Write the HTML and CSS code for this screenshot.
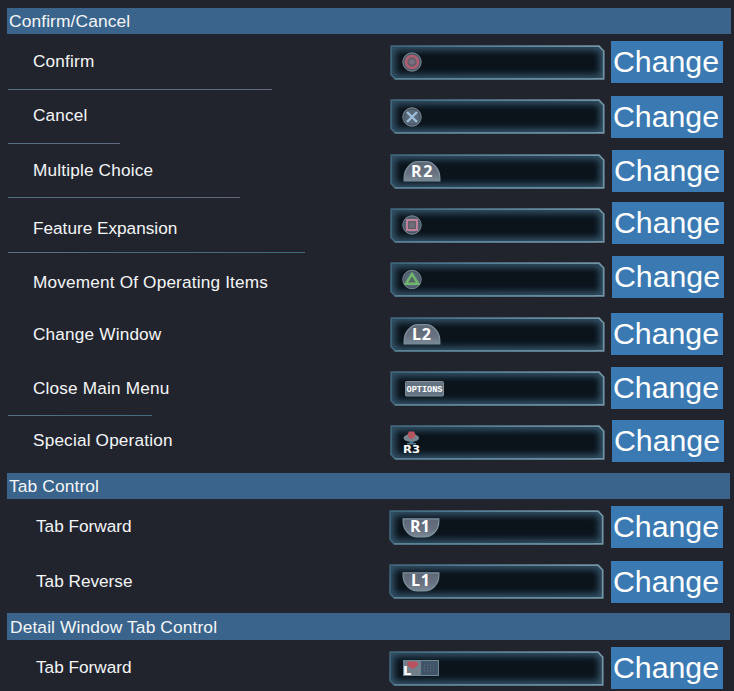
FILE: index.html
```
<!DOCTYPE html>
<html lang="en">
<head>
<meta charset="utf-8">
<title>Controls</title>
<link rel="stylesheet" href="styles.css">
</head>
<body>
<svg class="defs" width="0" height="0" aria-hidden="true">
  <defs>
    <filter id="glow" x="-10%" y="-50%" width="120%" height="200%"><feGaussianBlur stdDeviation="3"/></filter>
    <linearGradient id="edge" x1="0" y1="0" x2="1" y2="0">
      <stop offset="0" stop-color="#3f6478"/><stop offset=".4" stop-color="#557c91"/><stop offset="1" stop-color="#7394a5"/>
    </linearGradient>
    <linearGradient id="steel" x1="0" y1="0" x2="0" y2="1">
      <stop offset="0" stop-color="#5d6775"/><stop offset=".6" stop-color="#68717f"/><stop offset="1" stop-color="#7b8a98"/>
    </linearGradient>
    <clipPath id="frameClip"><path d="M1.5 1H209L214 6V34H5L1 30V1Z"/></clipPath>
    <symbol id="frame" viewBox="0 0 216 36" overflow="visible">
      <path d="M1.5 1H209L214 6V34H5L1 30V1Z" fill="#0b131b"/>
      <g clip-path="url(#frameClip)"><path d="M1.5 1H209L214 6V34H5L1 30V1Z" fill="none" stroke="#315166" stroke-width="9" filter="url(#glow)"/></g>
      <path d="M1.2 1.2H209L213.7 6V33.8H5L1 29.5Z" fill="none" stroke="url(#edge)" stroke-width="1.7"/>
      <path d="M5 33.8H205" stroke="#658a9d" stroke-width="1.3"/>
    </symbol>
    <symbol id="disc" viewBox="0 0 20 20">
      <circle cx="10" cy="10" r="9.2" fill="#596879" stroke="#7c8994" stroke-width="1"/>
      <circle cx="10" cy="10" r="7.9" fill="none" stroke="#465462" stroke-width="1"/>
    </symbol>
    <symbol id="upper" viewBox="0 0 38 22">
      <path d="M1.2 20.3V17C1.2 9 7.5 1.2 15 1.2H23C30.5 1.2 36.8 9 36.8 17V20.3Z" fill="url(#steel)" stroke="#7d909e" stroke-width="1.3"/>
    </symbol>
    <symbol id="lower" viewBox="0 0 38 22">
      <path d="M1.2 1.2H36.8V4.5C36.8 12.5 30 19.3 22.5 19.3H15.5C8 19.3 1.2 12.5 1.2 4.5Z" fill="url(#steel)" stroke="#7d909e" stroke-width="1.3"/>
    </symbol>
  </defs>
</svg>
<main class="settings">
  <h2 class="heading">Confirm/Cancel</h2>
  <section>
    <div class="row confirm"><span class="label">Confirm</span>
      <svg class="field" viewBox="0 0 216 36"><use href="#frame"/><use href="#disc" x="12" y="7" width="20" height="20"/><circle cx="22" cy="17" r="6" fill="#61606b" stroke="#ae5e70" stroke-width="2.7"/><circle cx="22" cy="17" r="2.5" fill="#7c7180"/></svg>
      <button class="change">Change</button></div>
    <div class="row cancel"><span class="label">Cancel</span>
      <svg class="field" viewBox="0 0 216 36"><use href="#frame"/><use href="#disc" x="12" y="8" width="20" height="20"/><path d="M17 13l10 10m0-10l-10 10" stroke="#9dbfd9" stroke-width="2.4"/></svg>
      <button class="change">Change</button></div>
    <div class="row multiple"><span class="label">Multiple Choice</span>
      <svg class="field" viewBox="0 0 216 36"><use href="#frame"/><use href="#upper" x="13" y="6.5" width="38" height="22"/><text class="pad" x="21" y="23" textLength="21.5">R2</text></svg>
      <button class="change">Change</button></div>
    <div class="row feature"><span class="label">Feature Expansion</span>
      <svg class="field" viewBox="0 0 216 36"><use href="#frame"/><use href="#disc" x="12" y="7" width="20" height="20"/><rect x="17" y="12" width="10" height="10" fill="#625f6b" stroke="#bf8199" stroke-width="2"/><rect x="19.5" y="14.5" width="5" height="5" fill="#716c79"/></svg>
      <button class="change">Change</button></div>
    <div class="row movement"><span class="label">Movement Of Operating Items</span>
      <svg class="field" viewBox="0 0 216 36"><use href="#frame"/><use href="#disc" x="12" y="7.5" width="20" height="20"/><path d="M22 12L28.2 21.8H15.8Z" fill="#526a64" stroke="#70b66d" stroke-width="2.4"/></svg>
      <button class="change">Change</button></div>
    <div class="row window"><span class="label">Change Window</span>
      <svg class="field" viewBox="0 0 216 36"><use href="#frame"/><use href="#upper" x="13" y="6.5" width="38" height="22"/><text class="pad" x="22" y="23" textLength="19">L2</text></svg>
      <button class="change">Change</button></div>
    <div class="row close"><span class="label">Close Main Menu</span>
      <svg class="field" viewBox="0 0 216 36"><use href="#frame"/><rect x="15.5" y="10.5" width="38" height="14.5" rx="1" fill="#657482" stroke="#7f8d99"/><text class="options" x="16.5" y="21.3" textLength="36" lengthAdjust="spacingAndGlyphs">OPTIONS</text></svg>
      <button class="change">Change</button></div>
    <div class="row special"><span class="label">Special Operation</span>
      <svg class="field" viewBox="0 0 216 36"><use href="#frame"/><ellipse cx="21.3" cy="13" rx="7.8" ry="3.8" fill="#758590"/><path d="M19 16h5l-1 2h3v1.5h-9V18h3z" fill="#52798b"/><path d="M19 6.5h5l1.5 3-1 3-3 1.7-3-1.7-1-3z" fill="#b7555f"/><text class="stick" x="13" y="27.7" textLength="17" lengthAdjust="spacingAndGlyphs">R3</text></svg>
      <button class="change">Change</button></div>
  </section>
  <h2 class="heading tab-heading">Tab Control</h2>
  <section class="tabs">
    <div class="row forward"><span class="label">Tab Forward</span>
      <svg class="field" viewBox="0 0 216 36"><use href="#frame"/><use href="#lower" x="13" y="7.6" width="38" height="22"/><text class="pad" x="21" y="22" textLength="20">R1</text></svg>
      <button class="change">Change</button></div>
    <div class="row reverse"><span class="label">Tab Reverse</span>
      <svg class="field" viewBox="0 0 216 36"><use href="#frame"/><use href="#lower" x="13" y="7.6" width="38" height="22"/><text class="pad" x="22" y="22" textLength="19">L1</text></svg>
      <button class="change">Change</button></div>
  </section>
  <h2 class="heading detail">Detail Window Tab Control</h2>
  <section class="tabs">
    <div class="row forward"><span class="label">Tab Forward</span>
      <svg class="field" viewBox="0 0 216 36"><use href="#frame"/><rect x="14.5" y="9.5" width="35" height="15" fill="#40566a" stroke="#708694"/><path d="M15 10h17v14H15z" fill="#71808b"/><path d="M34 12h13v11H34z" fill="#405266"/><path d="M35 14h12M35 17h12M35 20h12" stroke="#607487" stroke-dasharray="1 2"/><path d="M18 12l2-1.5h7l2 1.5v2L24 18l-5-3z" fill="#b9525e"/><text class="letter" x="14" y="24">L</text></svg>
      <button class="change">Change</button></div>
  </section>
</main>
</body>
</html>
```
FILE: styles.css
```
* { box-sizing: border-box; }
body {
  margin: 0;
  background: #22242d;
  color: #f4f6f8;
  font-family: "Liberation Sans", Arial, sans-serif;
  overflow: hidden;
}
.defs { display: block; }
.settings { padding: 8px 3px 0 7px; }
.heading {
  height: 26px;
  margin: 0;
  padding-left: 2px;
  background: #3a648b;
  font-size: 17.4px;
  font-weight: 400;
  line-height: 27px;
  letter-spacing: .1px;
}
.tab-heading, .detail { margin-right: 1px; }
.detail { padding-left: 3px; height: 27px; line-height: 28px; }
.row {
  --label: 17px;
  --field: 10px;
  --button: 6px;
  --line: 0px;
  --shift: 0px;
  --line-color: #61697a;
  display: grid;
  grid-template-columns: 383px 221px 112px;
  align-items: start;
  height: 54px;
  background: linear-gradient(90deg, #567082, var(--line-color)) 1px 100% / var(--line) 1px no-repeat;
}
.label {
  margin: var(--label) 0 0 26px;
  font-size: 17.2px;
  line-height: 20px;
  letter-spacing: .18px;
  white-space: nowrap;
}
.field {
  display: block;
  width: 216px;
  height: 36px;
  margin-top: var(--field);
}
.change {
  width: 112px;
  height: 42px;
  margin: var(--button) 0 0 var(--shift);
  padding: 0 2px 0 0;
  border: 0;
  background: #3b79b2;
  color: #fff;
  font: 30.3px/42px "Liberation Sans", Arial, sans-serif;
}
.confirm { --field: 11px; --button: 7px; --line: 264px; height: 56px; }
.cancel { --label: 15px; --field: 9px; --line: 112px; }
.multiple { --label: 16px; --shift: 1px; --line: 232px; }
.feature { --label: 20px; --button: 4px; --shift: 1px; --line: 297px; --line-color: #426879; height: 55px; }
.feature .label { letter-spacing: 0; }
.movement { --label: 19px; --field: 9px; --button: 3px; --shift: 1px; }
.close { --line: 144px; --line-color: #456b7e; height: 55px; }
.special { --label: 14px; --field: 9px; --button: 4px; --shift: 1px; height: 57px; }
.tabs .row { --button: 7px; grid-template-columns: 382px 222px 112px; }
.tabs .label { margin-left: 29px; letter-spacing: 0; }
.tabs .forward { --field: 11px; height: 55px; }
.tabs .reverse { height: 59px; }
.pad { fill: #fff; font: 700 16px "Open Sans", sans-serif; }
.options { fill: #fff; font: 700 9px "Liberation Mono", monospace; }
.stick { fill: #fff; font: 700 10px "DejaVu Sans", sans-serif; }
.letter { fill: #fff; font: 700 13px "DejaVu Sans", sans-serif; }
```
